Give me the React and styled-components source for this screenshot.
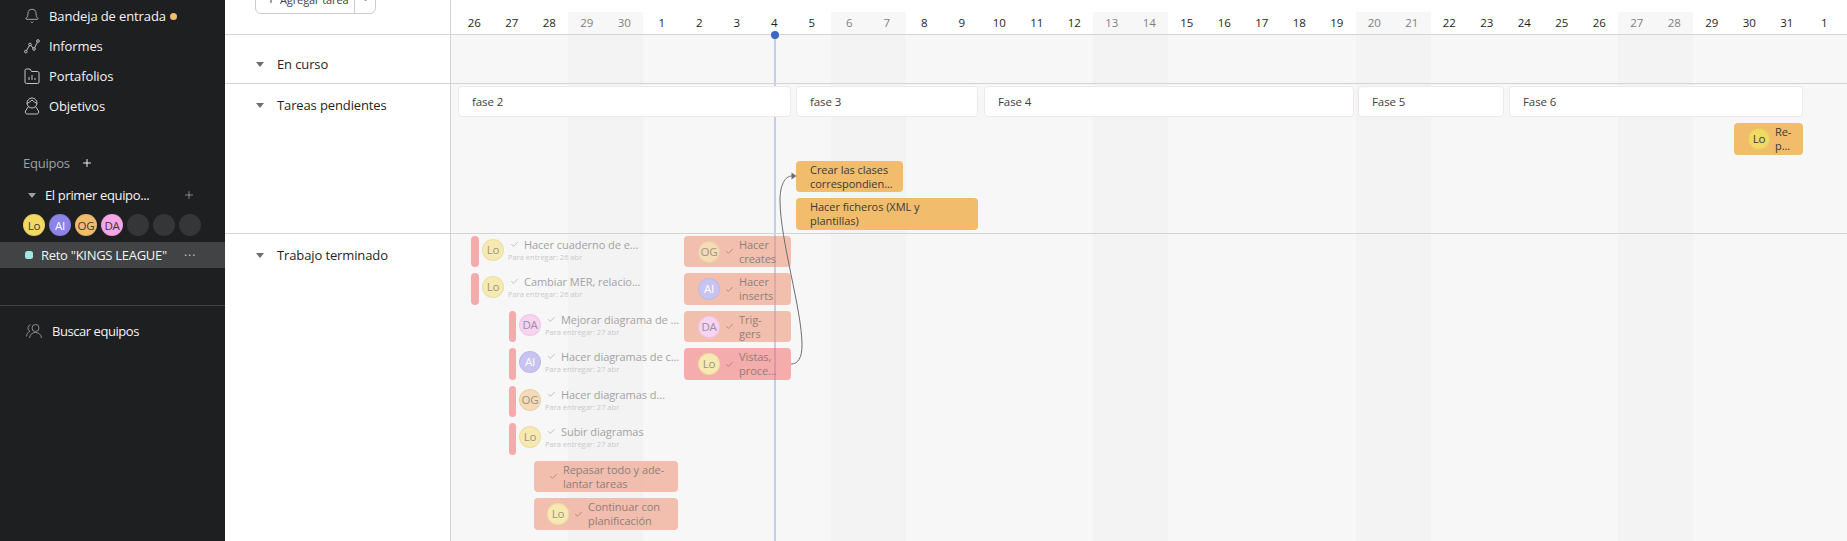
import React from "react";
import styled, { createGlobalStyle } from "styled-components";
import { Bell, Check, ChevronDown, Plus } from "lucide-react";

const DAY = 37.5;
const LANE_LEFT = 451;

const GlobalStyle = createGlobalStyle`
  html, body { margin: 0; padding: 0; height: 100%; overflow: hidden; background: #fff; }
  body { font-family: "Open Sans", "Liberation Sans", sans-serif; }
  #root { height: 100%; }
`;

const Page = styled.div`
  display: flex;
  width: 1847px;
  height: 541px;
  overflow: hidden;
`;

/* ---------- sidebar ---------- */

const Sidebar = styled.aside`
  width: 225px;
  flex: none;
  background: #1e1f21;
  color: #f5f4f3;
  padding-top: 1px;
  font-size: 13px;
  letter-spacing: -0.12px;
`;

const NavItem = styled.div`
  display: flex;
  align-items: center;
  gap: 9px;
  height: 30px;
  padding-left: 24px;

  svg { width: 16px; height: 18px; flex: none; color: #c7c4c4; }
`;

const InboxDot = styled.span`
  width: 7px;
  height: 7px;
  border-radius: 50%;
  background: #f1bd6c;
  margin-left: -5px;
`;

const TeamsHeading = styled.div`
  display: flex;
  align-items: center;
  gap: 11px;
  margin-top: 28px;
  height: 28px;
  padding-left: 23px;
  color: #a2a0a2;
  font-weight: 500;
  letter-spacing: -0.25px;

  svg { color: #f5f4f3; }
`;

const TeamRow = styled.div`
  display: flex;
  align-items: center;
  height: 28px;
  margin-top: 4px;
  padding-left: 28px;
  gap: 9px;
  letter-spacing: -0.35px;

  svg.add { color: #a2a0a2; margin-left: auto; margin-right: 30px; }
`;

const Caret = styled.span`
  width: 0;
  height: 0;
  border-left: 4.5px solid transparent;
  border-right: 4.5px solid transparent;
  border-top: 5px solid ${(p) => p.$color || "#a2a0a2"};
  flex: none;
`;

const AvatarRow = styled.div`
  display: flex;
  gap: 4px;
  padding-left: 23px;
  margin-top: 5px;
`;

const Avatar = styled.span`
  width: 22px;
  height: 22px;
  flex: none;
  border-radius: 50%;
  display: flex;
  align-items: center;
  justify-content: center;
  background: ${(p) => p.$bg};
  color: ${(p) => p.$fg};
  font-size: 11.5px;
  letter-spacing: -0.2px;
  box-shadow: inset 0 0 0 1px rgba(0, 0, 0, 0.05);
`;

const EmptyAvatar = styled.span`
  width: 22px;
  height: 22px;
  border-radius: 50%;
  background: #353638;
`;

const ProjectRow = styled.div`
  display: flex;
  align-items: center;
  height: 26px;
  margin-top: 6px;
  padding-left: 25px;
  background: #424345;
  letter-spacing: -0.28px;
`;

const ProjectDot = styled.span`
  width: 8px;
  height: 8px;
  border-radius: 2.5px;
  background: #9ee7e3;
  margin-right: 8px;
`;

const ProjectMenu = styled.span`
  margin-left: 17px;
  color: #c7c4c4;
  font-size: 12px;
  letter-spacing: 1px;
  line-height: 10px;
  margin-top: -6px;
`;

const Divider = styled.div`
  border-top: 1px solid #424244;
  margin-top: 37px;
`;

const BrowseRow = styled.div`
  display: flex;
  align-items: center;
  gap: 10px;
  height: 50px;
  padding-left: 26px;
  letter-spacing: -0.45px;

  svg { width: 16px; height: 16px; color: #8f8d8d; }
`;

/* ---------- main ---------- */

const Main = styled.main`
  flex: 1;
  display: flex;
  min-width: 0;
`;

const LabelColumn = styled.div`
  width: 225px;
  flex: none;
  border-right: 1px solid #d5d4d4;
`;

const LabelHead = styled.div`
  display: flex;
  align-items: flex-start;
  height: 34px;
  border-bottom: 1px solid #d5d4d4;
  margin-right: -1px;
  padding-left: 30px;
`;

const AddTask = styled.div`
  display: flex;
  align-items: center;
  height: 28px;
  margin-top: -16px;
  border: 1px solid #cfcbcb;
  border-radius: 6px;
  color: #6d6e6f;
  font-size: 11px;
  letter-spacing: -0.1px;
  white-space: nowrap;
  background: #fff;
`;

const AddMain = styled.span`
  display: flex;
  align-items: center;
  gap: 3px;
  width: 99px;
  padding-left: 9px;
  box-sizing: border-box;
  height: 100%;
  color: #3f4042;
  border-right: 1px solid #cfcbcb;
`;

const AddMore = styled.span`
  width: 20px;
  display: flex;
  justify-content: center;
`;

const LabelRow = styled.div`
  box-sizing: border-box;
  height: ${(p) => p.$h + 1}px;
  border-bottom: 1px solid ${(p) => (p.$last ? "transparent" : "#d5d4d4")};
  margin-right: -1px;
  display: flex;
  align-items: flex-start;
  gap: 13px;
  padding: ${(p) => p.$pt}px 0 0 31px;
  color: #1e1f21;
  font-size: 13px;
  font-weight: 500;
  letter-spacing: -0.12px;
  line-height: 18px;

  ${Caret} { margin-top: 7px; }
`;

const Timeline = styled.div`
  flex: 1;
  position: relative;
  min-width: 0;
`;

const DayHeader = styled.div`
  height: 34px;
  border-bottom: 1px solid #d5d4d4;
  display: grid;
  grid-template-columns: repeat(37, ${DAY}px);
  padding-left: 4.5px;
  align-items: end;
  position: relative;
  z-index: 2;
`;

const DayCell = styled.span`
  text-align: center;
  font-size: 11.5px;
  line-height: 22px;
  letter-spacing: -0.1px;
  color: ${(p) => (p.$weekend ? "#7f7e7f" : "#1e1f21")};
  background: ${(p) => (p.$weekend ? "rgba(0, 0, 0, 0.015)" : "transparent")};
`;

const WeekendBand = styled.div`
  position: absolute;
  top: 12px;
  bottom: 0;
  left: ${(p) => 4.5 + p.$index * DAY}px;
  width: ${DAY * 2}px;
  background: #fcfbfc;
  border-radius: 3px 3px 0 0;
`;

const TodayLine = styled.div`
  position: absolute;
  top: 34px;
  bottom: 0;
  left: ${774.5 - LANE_LEFT - 1}px;
  width: 2px;
  background: #ccd5ee;
`;

const TodayDot = styled.span`
  position: absolute;
  top: 31px;
  left: ${774.5 - LANE_LEFT - 4}px;
  width: 8px;
  height: 8px;
  border-radius: 50%;
  background: #3b66c7;
  z-index: 3;
`;

const Lane = styled.div`
  position: relative;
  height: ${(p) => p.$h}px;
  background: rgba(0, 0, 0, 0.03);
  border-bottom: 1px solid ${(p) => (p.$last ? "transparent" : "#d5d4d4")};
`;

const placed = (p) => `
  left: ${p.$x0 - LANE_LEFT}px;
  top: ${p.$y0 - p.$laneTop}px;
  width: ${p.$x1 - p.$x0}px;
  height: ${p.$y1 - p.$y0}px;
`;

const Phase = styled.div`
  position: absolute;
  ${placed}
  box-sizing: border-box;
  background: #fff;
  border: 1px solid #edeae9;
  border-radius: 4px;
  display: flex;
  align-items: center;
  padding-left: 13px;
  font-size: 11.5px;
  letter-spacing: -0.1px;
  color: #3f4042;
`;

const Card = styled.div`
  position: absolute;
  ${placed}
  box-sizing: border-box;
  border-radius: 4px;
  display: flex;
  align-items: center;
  gap: 5px;
  padding-left: ${(p) => p.$pad}px;
  background: ${(p) =>
    p.$tone === "open"
      ? "#f1bd6c"
      : p.$tone === "hot"
      ? "rgba(241, 97, 97, 0.5)"
      : "rgba(237, 135, 104, 0.5)"};
  color: ${(p) => (p.$tone === "open" ? "#3a3a3a" : "#8f7f7a")};
  font-size: 11px;
  line-height: 14px;
  letter-spacing: -0.05px;
  white-space: nowrap;
`;

const CardBar = styled.div`
  position: absolute;
  ${placed}
  border-radius: 4px;
  background: #f4abac;
`;

const CardNote = styled.div`
  position: absolute;
  left: ${(p) => p.$x - LANE_LEFT}px;
  top: ${(p) => p.$y - 234}px;
  display: flex;
  align-items: center;
  gap: 4px;
  white-space: nowrap;
`;

const NoteText = styled.div`
  display: flex;
  flex-direction: column;
`;

const NoteTitle = styled.div`
  display: flex;
  align-items: center;
  gap: 5px;
  color: #a3a2a3;
  font-size: 11px;
  line-height: 15px;
  letter-spacing: -0.05px;
  padding-left: 2px;

  svg { color: #9f9e9f; flex: none; }
`;

const NoteDue = styled.div`
  color: #c9c8c9;
  font-size: 7.5px;
  line-height: 9px;
  margin-top: 1px;
`;

const Tick = styled(Check).attrs({ size: 9, strokeWidth: 1.6 })`
  flex: none;
  color: #7f6f6a;
`;

const ArrowSvg = styled.svg`
  position: absolute;
  left: ${770 - LANE_LEFT}px;
  top: 170px;
  z-index: 3;
  overflow: visible;
`;

const PEOPLE = {
  Lo: { bg: "#f2d864", fg: "#3a3a3a", fadedBg: "#f7eab0", fadedFg: "#9a9488" },
  AI: { bg: "#8d84e8", fg: "#fff", fadedBg: "#c8c3f1", fadedFg: "#fff" },
  OG: { bg: "#f1bd6c", fg: "#3a3a3a", fadedBg: "#f5dcb6", fadedFg: "#9a9488" },
  DA: { bg: "#f5a6e6", fg: "#3a3a3a", fadedBg: "#f8d3f2", fadedFg: "#9a9099" },
};

const Person = ({ who, faded }) => (
  <Avatar
    $bg={faded ? PEOPLE[who].fadedBg : PEOPLE[who].bg}
    $fg={faded ? PEOPLE[who].fadedFg : PEOPLE[who].fg}
  >
    {who}
  </Avatar>
);

const Lines = ({ rows }) => (
  <div>
    {rows.map((r) => (
      <div key={r}>{r}</div>
    ))}
  </div>
);

const ReportsIcon = () => (
  <svg viewBox="0 0 16 18" fill="none" stroke="currentColor" strokeWidth="1">
    <path d="M2 14.5 6 7.5l4 4.5 4-8" />
    <circle cx="1.8" cy="14.6" r="1.3" fill="#1e1f21" />
    <circle cx="6" cy="7.5" r="1.3" fill="#1e1f21" />
    <circle cx="10" cy="12" r="1.3" fill="#1e1f21" />
    <circle cx="14" cy="4" r="1.3" fill="#1e1f21" />
  </svg>
);

const FolderIcon = () => (
  <svg viewBox="0 0 16 18" fill="none" stroke="currentColor" strokeWidth="1">
    <path d="M1 3.5a1.5 1.5 0 0 1 1.5-1.5H6l1.5 2.5h6A1.5 1.5 0 0 1 15 6v9a1.5 1.5 0 0 1-1.5 1.5h-11A1.5 1.5 0 0 1 1 15z" />
    <path d="M5 13v-3M8 13V8M11 13v-2" />
  </svg>
);

const GoalIcon = () => (
  <svg viewBox="0 0 16 18" fill="none" stroke="currentColor" strokeWidth="1">
    <circle cx="8" cy="6" r="5" />
    <path d="M3 6.5C5 5.5 6.5 4.5 8 3c1.5 1.5 3 2.5 5 3.5" />
    <path d="M4.5 9.5 1.5 14a2 2 0 0 0 1.7 3h9.6a2 2 0 0 0 1.7-3l-3-4.5" />
  </svg>
);

const UsersIcon = () => (
  <svg viewBox="0 0 16 16" fill="none" stroke="currentColor" strokeWidth="1">
    <circle cx="9.5" cy="5" r="3.5" />
    <path d="M3.5 15c.4-3.5 2.8-5.5 6-5.5s5.6 2 6 5.5" />
    <path d="M4.5 1.7A3.5 3.5 0 0 0 4 8.3C2 9 .7 11 .5 13.5" />
  </svg>
);

const MONTH_DAYS = [
  26, 27, 28, 29, 30, 1, 2, 3, 4, 5, 6, 7, 8, 9, 10, 11, 12, 13, 14, 15, 16, 17, 18, 19,
  20, 21, 22, 23, 24, 25, 26, 27, 28, 29, 30, 31, 1,
];
const WEEKEND_STARTS = [3, 10, 17, 24, 31];

const isWeekend = (i) => WEEKEND_STARTS.some((s) => i === s || i === s + 1);

const PHASES = [
  { name: "fase 2", x0: 458, x1: 791 },
  { name: "fase 3", x0: 796, x1: 978 },
  { name: "Fase 4", x0: 984, x1: 1354 },
  { name: "Fase 5", x0: 1358, x1: 1504 },
  { name: "Fase 6", x0: 1509, x1: 1803 },
];

const NOTES = [
  { who: "Lo", title: "Hacer cuaderno de e...", due: "Para entregar: 26 abr", x0: 471, x1: 479, y0: 236, y1: 267 },
  { who: "Lo", title: "Cambiar MER, relacio...", due: "Para entregar: 26 abr", x0: 471, x1: 479, y0: 273, y1: 305 },
  { who: "DA", title: "Mejorar diagrama de ...", due: "Para entregar: 27 abr", x0: 509, x1: 516, y0: 311, y1: 342 },
  { who: "AI", title: "Hacer diagramas de c...", due: "Para entregar: 27 abr", x0: 509, x1: 516, y0: 348, y1: 380 },
  { who: "OG", title: "Hacer diagramas d...", due: "Para entregar: 27 abr", x0: 509, x1: 516, y0: 386, y1: 417 },
  { who: "Lo", title: "Subir diagramas", due: "Para entregar: 27 abr", x0: 509, x1: 516, y0: 423, y1: 455 },
];

const DONE = [
  { who: "OG", rows: ["Hacer", "creates"], y0: 236, y1: 267 },
  { who: "AI", rows: ["Hacer", "inserts"], y0: 273, y1: 305 },
  { who: "DA", rows: ["Trig-", "gers"], y0: 311, y1: 342 },
  { who: "Lo", rows: ["Vistas,", "proce..."], y0: 348, y1: 380, tone: "hot" },
];

export default function App() {
  return (
    <Page>
      <GlobalStyle />
      <Sidebar>
        <NavItem>
          <Bell strokeWidth={1.2} />
          Bandeja de entrada
          <InboxDot />
        </NavItem>
        <NavItem>
          <ReportsIcon />
          Informes
        </NavItem>
        <NavItem>
          <FolderIcon />
          Portafolios
        </NavItem>
        <NavItem>
          <GoalIcon />
          Objetivos
        </NavItem>
        <TeamsHeading>
          Equipos
          <Plus size={12} strokeWidth={2} />
        </TeamsHeading>
        <TeamRow>
          <Caret />
          El primer equipo...
          <Plus className="add" size={12} strokeWidth={1.6} />
        </TeamRow>
        <AvatarRow>
          <Person who="Lo" />
          <Person who="AI" />
          <Person who="OG" />
          <Person who="DA" />
          <EmptyAvatar />
          <EmptyAvatar />
          <EmptyAvatar />
        </AvatarRow>
        <ProjectRow>
          <ProjectDot />
          Reto "KINGS LEAGUE"
          <ProjectMenu>...</ProjectMenu>
        </ProjectRow>
        <Divider />
        <BrowseRow>
          <UsersIcon />
          Buscar equipos
        </BrowseRow>
      </Sidebar>
      <Main>
        <LabelColumn>
          <LabelHead>
            <AddTask>
              <AddMain>
                <Plus size={12} />
                Agregar tarea
              </AddMain>
              <AddMore>
                <ChevronDown size={11} />
              </AddMore>
            </AddTask>
          </LabelHead>
          <LabelRow $h={48} $pt={20}>
            <Caret $color="#6d6e6f" />
            En curso
          </LabelRow>
          <LabelRow $h={149} $pt={12}>
            <Caret $color="#6d6e6f" />
            Tareas pendientes
          </LabelRow>
          <LabelRow $h={306} $pt={12} $last>
            <Caret $color="#6d6e6f" />
            Trabajo terminado
          </LabelRow>
        </LabelColumn>
        <Timeline>
          {WEEKEND_STARTS.map((s) => (
            <WeekendBand key={s} $index={s} />
          ))}
          <TodayLine />
          <TodayDot />
          <DayHeader>
            {MONTH_DAYS.map((d, i) => (
              <DayCell key={i} $weekend={isWeekend(i)}>
                {d}
              </DayCell>
            ))}
          </DayHeader>
          <Lane $h={48} />
          <Lane $h={149}>
            {PHASES.map((p) => (
              <Phase key={p.name} $laneTop={84} $x0={p.x0} $x1={p.x1} $y0={86} $y1={117}>
                {p.name}
              </Phase>
            ))}
            <Card $tone="open" $pad={14} $laneTop={84} $x0={1734} $x1={1803} $y0={123} $y1={155}>
              <Person who="Lo" />
              <Lines rows={["Re-", "p..."]} />
            </Card>
            <Card $tone="open" $pad={14} $laneTop={84} $x0={796} $x1={903} $y0={161} $y1={192}>
              <Lines rows={["Crear las clases", "correspondien..."]} />
            </Card>
            <Card $tone="open" $pad={14} $laneTop={84} $x0={796} $x1={978} $y0={198} $y1={230}>
              <Lines rows={["Hacer ficheros (XML y", "plantillas)"]} />
            </Card>
          </Lane>
          <Lane $h={306} $last>
            {NOTES.map((n) => (
              <React.Fragment key={n.title}>
                <CardBar $laneTop={234} $x0={n.x0} $x1={n.x1} $y0={n.y0} $y1={n.y1} />
                <CardNote $x={n.x1 + 3} $y={n.y0 + 1}>
                  <Person who={n.who} faded />
                  <NoteText>
                    <NoteTitle>
                      <Check size={9} strokeWidth={1.6} />
                      {n.title}
                    </NoteTitle>
                    <NoteDue>{n.due}</NoteDue>
                  </NoteText>
                </CardNote>
              </React.Fragment>
            ))}
            {DONE.map((d) => (
              <Card key={d.who} $tone={d.tone} $pad={14} $laneTop={234} $x0={684} $x1={791} $y0={d.y0} $y1={d.y1}>
                <Person who={d.who} faded />
                <Tick />
                <Lines rows={d.rows} />
              </Card>
            ))}
            <Card $pad={15} $laneTop={234} $x0={534} $x1={678} $y0={461} $y1={492}>
              <Tick />
              <Lines rows={["Repasar todo y ade-", "lantar tareas"]} />
            </Card>
            <Card $pad={13} $laneTop={234} $x0={534} $x1={678} $y0={498} $y1={530}>
              <Person who="Lo" faded />
              <Tick />
              <Lines rows={["Continuar con", "planificación"]} />
            </Card>
          </Lane>
          <ArrowSvg width="40" height="200" viewBox="770 170 40 200" fill="none">
            <path
              d="M791 364C798 364 802 358 802 345C802 310 780 240 780 200C780 185 785 176 792 176"
              stroke="#6d6e6f"
              strokeWidth="1"
            />
            <path d="M796.5 176 791.5 172.5V179.5z" fill="#6d6e6f" />
          </ArrowSvg>
        </Timeline>
      </Main>
    </Page>
  );
}
